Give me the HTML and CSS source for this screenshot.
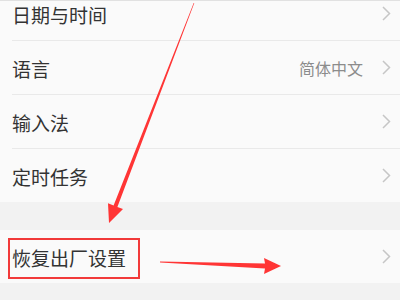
FILE: index.html
```html
<!DOCTYPE html>
<html lang="zh-CN">
<head>
  <meta charset="UTF-8" />
  <meta name="viewport" content="width=device-width, initial-scale=1.0"/>
  <title>设置</title>
  <link rel="stylesheet" href="styles.css">
</head>
<body>
  <div class="screen">
    <div class="group group-top">
      <div class="row">
        <div class="row-inner">
          <span class="label">日期与时间</span>
          <svg class="chevron" viewBox="0 0 9 15"><path d="M1 1 L7.5 7.5 L1 14"/></svg>
        </div>
      </div>
      <div class="row">
        <div class="row-inner">
          <span class="label">语言</span>
          <span class="value">简体中文</span>
          <svg class="chevron" viewBox="0 0 9 15"><path d="M1 1 L7.5 7.5 L1 14"/></svg>
        </div>
      </div>
      <div class="row">
        <div class="row-inner">
          <span class="label">输入法</span>
          <svg class="chevron" viewBox="0 0 9 15"><path d="M1 1 L7.5 7.5 L1 14"/></svg>
        </div>
      </div>
      <div class="row">
        <div class="row-inner">
          <span class="label">定时任务</span>
          <svg class="chevron" viewBox="0 0 9 15"><path d="M1 1 L7.5 7.5 L1 14"/></svg>
        </div>
      </div>
    </div>

    <div class="group group-reset">
      <div class="row">
        <div class="row-inner">
          <span class="label">恢复出厂设置</span>
          <svg class="chevron" viewBox="0 0 9 15"><path d="M1 1 L7.5 7.5 L1 14"/></svg>
        </div>
      </div>
    </div>

    <!-- red annotation marks drawn over the screenshot -->
    <svg class="marks" viewBox="0 0 400 300">
      <polygon points="194.3,3 193.7,3 113.6,205.5 108,203.3 109,223 123,209.1 117.4,206.9"/>
      <rect x="9" y="239" width="130" height="39" class="box"/>
      <polygon points="160,261.6 265,263.5 264,258 281,266 264,274 265,268.6 160,262.6"/>
    </svg>
  </div>
</body>
</html>
```

FILE: styles.css
```css
body {
  margin: 0;
  font-family: "Noto Sans CJK SC", "Noto Sans", sans-serif;
}

.screen {
  position: relative;
  width: 400px;
  height: 300px;
  overflow: hidden;
  background-color: #f2f2f2;
  border-top: 1px solid #e1e1e1;
  box-sizing: border-box;
}

.group {
  background-color: #fafafa;
}

.group-top {
  margin-top: -14px;
}

.group-reset {
  margin-top: 28px;
}

.row {
  padding-left: 12px;
}

.row-inner {
  display: flex;
  align-items: center;
  height: 54px;
  padding-right: 9px;
  border-bottom: 1px solid #e9e9e9;
  box-sizing: border-box;
}

.group .row:last-child .row-inner {
  border-bottom: none;
  height: 53px;
}

.label {
  flex: 1;
  font-size: 19px;
  color: #333;
  padding-top: 1px;
}

.value {
  font-size: 16px;
  color: #8c8c8c;
  margin-right: 19px;
}

.chevron {
  width: 9px;
  height: 15px;
  fill: none;
  stroke: #c6c6c6;
  stroke-width: 1.5;
}

.marks {
  position: absolute;
  top: -1px;
  left: 0;
  width: 400px;
  height: 300px;
  fill: #ff3535;
}

.marks .box {
  fill: none;
  stroke: #f23a3a;
  stroke-width: 2;
}
```
